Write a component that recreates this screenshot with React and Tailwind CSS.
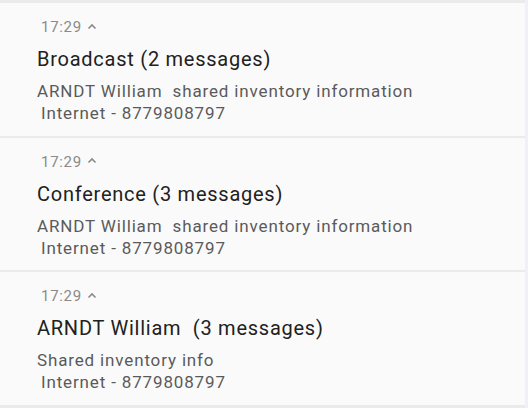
import React from "react";

const items = [
  { title: "Broadcast (2 messages)", body: "ARNDT William\u00a0 shared inventory information" },
  { title: "Conference (3 messages)", body: "ARNDT William\u00a0 shared inventory information" },
  { title: "ARNDT William\u00a0 (3 messages)", body: "Shared inventory info" },
];

const Chevron = () => (
  <svg width="10" height="7" viewBox="0 0 10 7" className="ml-[5px] mb-[2px]">
    <path d="M1.5 5.5 L5 2 L8.5 5.5" fill="none" stroke="#8a8a8a" strokeWidth="1.6" />
  </svg>
);

const Card = ({ title, body }) => (
  <div className="h-[133px] bg-[#fafafa] pl-[37px] pt-[14px]">
    <div className="flex items-center pl-[4px] text-[15px] leading-[20px] tracking-[0.7px] text-[#8a8a8a]">
      17:29
      <Chevron />
    </div>
    <div className="mt-[9px] text-[20px] leading-[26px] tracking-[0.75px] text-[#212121]">{title}</div>
    <div className="mt-[8px] text-[17px] leading-[22px] tracking-[0.85px] text-[#5a5a5a]">
      <div>{body}</div>
      <div className="pl-[4px]">Internet - 8779808797</div>
    </div>
  </div>
);

export default function App() {
  return (
    <div className="flex h-[408px] w-[528px] bg-[#eef2f8]" style={{ fontFamily: "Roboto, 'Noto Sans', sans-serif" }}>
      <div className="flex w-[525px] flex-col gap-[2px] bg-[#ebebeb] py-[3px]">
        {items.map((it, i) => (
          <Card key={i} {...it} />
        ))}
      </div>
    </div>
  );
}
